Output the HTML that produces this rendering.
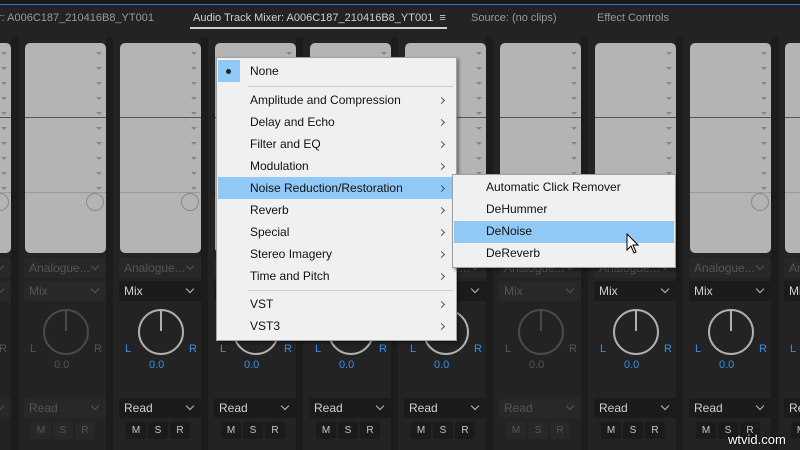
<!DOCTYPE html>
<html><head><meta charset="utf-8"><style>
*{margin:0;padding:0;box-sizing:border-box}
body{width:800px;height:450px;overflow:hidden;background:#1c1c1c;font-family:"Liberation Sans",sans-serif;position:relative}
.hdr{position:absolute;left:0;top:0;width:800px;height:37px;background:#232323;border-top:4px solid #1a1a1a}
.blue{position:absolute;left:0;top:4px;width:800px;height:1px;background:#2f6fd6}
.tab{position:absolute;top:12px;font-size:11px;color:#9a9a9a;white-space:nowrap}
#cols{position:absolute;left:0;top:0;width:800px;height:450px;overflow:hidden}
.col{position:absolute;top:37px;width:88px;height:413px;background:#232323}
.box{position:absolute;left:7px;top:6px;width:81px;height:210px;background:#b4b4b4;border-radius:5px}
.tick{position:absolute;right:4px;width:0;height:0;border-left:3px solid transparent;border-right:3px solid transparent;border-top:3px solid #858585}
.hl{position:absolute;left:0;right:0;height:1px;background:#555}
.hl2{position:absolute;left:0;right:0;height:1px;background:#9a9a9a}
.knobc{position:absolute;right:2px;width:18px;height:18px;border:1px solid #888;border-radius:50%}
.dd{position:absolute;left:6px;width:82px;height:20px;background:#1b1b1b;border-radius:2px;color:#d0d0d0;font-size:12px;padding:3px 0 0 5px}
.dd.dis{background:#282828;color:#555}
.dd:after{content:"";position:absolute;right:8px;top:5px;width:5px;height:5px;border-right:1px solid #bbb;border-bottom:1px solid #bbb;transform:rotate(45deg)}
.dd.dis:after{border-color:#555}
.knob{position:absolute;left:25px;top:272px;width:46px;height:46px;border:2px solid #b0b0b0;border-radius:50%}
.knob:after{content:"";position:absolute;left:20px;top:-1px;width:2px;height:21px;background:#b0b0b0}
.lr{position:absolute;top:306px;font-size:11px;color:#3a8ee6}
.val{position:absolute;left:36px;top:322px;font-size:11px;color:#3a8ee6}
.dis2 .knob,.dis2 .knob:after{border-color:#4a4a4a}
.dis2 .knob:after{background:#4a4a4a}
.dis2 .lr,.dis2 .val{color:#555}
.btn{position:absolute;top:385px;width:20px;height:17px;background:#1b1b1b;border-radius:2px;color:#c8c8c8;font-size:10px;text-align:center;line-height:17px}
.dis2 .btn{background:#282828;color:#555}
.menu{position:absolute;left:216px;top:57px;width:241px;height:284px;background:#f0f0f0;border:1px solid #a0a0a0;box-shadow:2px 2px 3px rgba(0,0,0,.4)}
.mi{position:absolute;left:33px;font-size:12px;color:#111;white-space:nowrap}
.ar{position:absolute;left:222px;width:5px;height:5px;border-right:1px solid #555;border-top:1px solid #555;transform:rotate(45deg)}
.sep{position:absolute;left:31px;right:3px;height:1px;background:#ccc}
.sub{position:absolute;left:452px;top:174px;width:224px;height:94px;background:#f0f0f0;border:1px solid #a0a0a0;box-shadow:2px 2px 3px rgba(0,0,0,.4)}
</style></head><body>
<div class="hdr"></div><div class="blue"></div>
<div class="tab" style="left:-2px">r: A006C187_210416B8_YT001</div>
<div class="tab" style="left:193px;color:#d0d0d0">Audio Track Mixer: A006C187_210416B8_YT001 &nbsp;≡</div>
<div style="position:absolute;left:190px;top:27px;width:257px;height:2px;background:#cfcfcf"></div>
<div class="tab" style="left:471px">Source: (no clips)</div>
<div class="tab" style="left:597px">Effect Controls</div>
<div id="cols"></div>
<div class="menu">
<div style="position:absolute;left:1px;top:2px;width:22px;height:22px;background:#90c8f6"></div>
<div style="position:absolute;left:9px;top:11px;width:5px;height:5px;border-radius:50%;background:#222"></div>
<div class="mi" style="top:6px">None</div>
<div class="sep" style="top:28px"></div>
<div style="position:absolute;left:1px;top:119px;width:237px;height:22px;background:#90c8f6"></div>
<div id="mitems"></div>
<div class="sep" style="top:232px"></div>
</div>
<div class="sub">
<div style="position:absolute;left:1px;top:46px;width:220px;height:22px;background:#90c8f6"></div>
<div class="mi" style="top:5px">Automatic Click Remover</div>
<div class="mi" style="top:27px">DeHummer</div>
<div class="mi" style="top:49px">DeNoise</div>
<div class="mi" style="top:71px">DeReverb</div>
</div>
<svg style="position:absolute;left:626px;top:233px" width="14" height="22" viewBox="0 0 14 22"><path d="M1 1 L1 17 L5 13 L8 20 L10 19 L7 12 L12 12 Z" fill="#fff" stroke="#000" stroke-width="1"/></svg>
<div style="position:absolute;left:728px;top:432px;font-size:13px;color:#fff;text-shadow:0 0 2px #000">wtvid.com</div>
<script>
var h='';
var dis={0:1,5:1,'-1':1};
for(var k=-1;k<9;k++){
 var x=18+95*k, d=dis[k];
 h+='<div class="col'+(d?' dis2':'')+'" style="left:'+x+'px"><div class="box">';
 for(var t=0;t<10;t++)h+='<div class="tick" style="top:'+(9+t*15)+'px"></div>';
 h+='<div class="hl" style="top:74px"></div><div class="hl2" style="top:149px"></div><div class="knobc" style="top:150px"></div></div>';
 h+='<div class="dd dis" style="top:221px">Analogue...</div>';
 h+='<div class="dd'+(d?' dis':'')+'" style="top:244px">Mix</div>';
 h+='<div class="knob"></div><div class="lr" style="left:12px">L</div><div class="lr" style="left:76px">R</div><div class="val">0.0</div>';
 h+='<div class="dd'+(d?' dis':'')+'" style="top:361px">Read</div>';
 h+='<div class="btn" style="left:13px">M</div><div class="btn" style="left:35px">S</div><div class="btn" style="left:57px">R</div>';
 h+='</div>';
}
document.getElementById('cols').innerHTML=h;
var it=['Amplitude and Compression','Delay and Echo','Filter and EQ','Modulation','Noise Reduction/Restoration','Reverb','Special','Stereo Imagery','Time and Pitch'];
var m='';
for(var i=0;i<it.length;i++){var y=35+22*i;m+='<div class="mi" style="top:'+y+'px">'+it[i]+'</div><div class="ar" style="top:'+(y+5)+'px"></div>';}
m+='<div class="mi" style="top:239px">VST</div><div class="ar" style="top:244px"></div><div class="mi" style="top:261px">VST3</div><div class="ar" style="top:266px"></div>';
document.getElementById('mitems').innerHTML=m;
</script>
</body></html>
